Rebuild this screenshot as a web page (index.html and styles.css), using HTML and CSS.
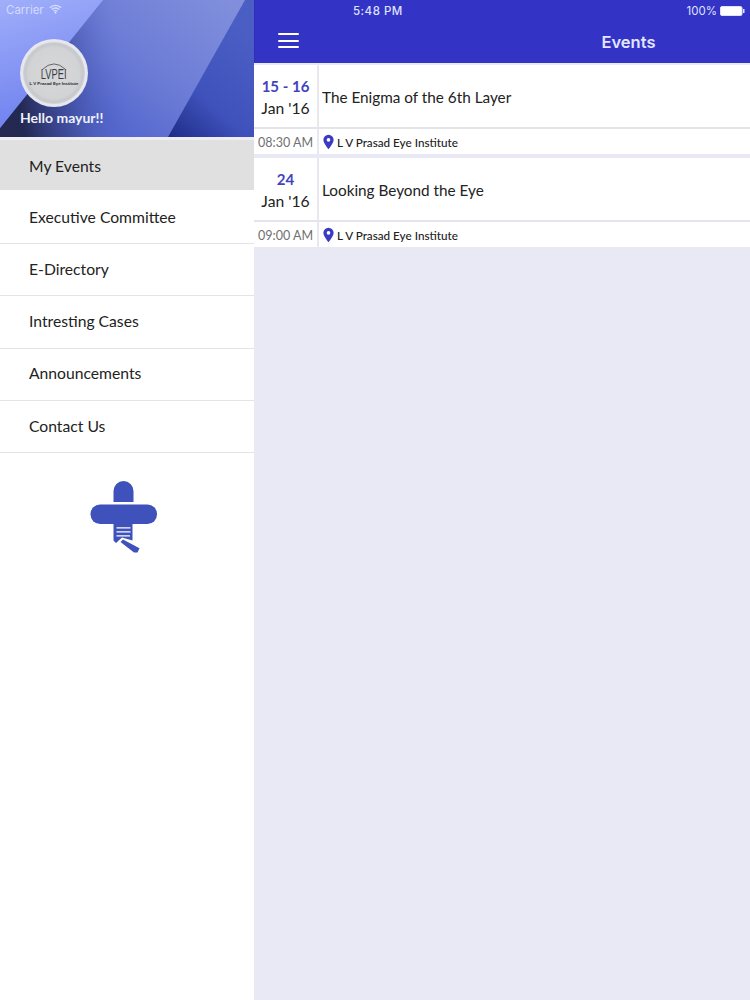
FILE: index.html
```html
<!DOCTYPE html>
<html lang="en">
<head>
<meta charset="utf-8">
<title>Events</title>
<link rel="stylesheet" href="styles.css">
</head>
<body>
<div class="app">
  <aside class="sidebar">
    <header class="profile">
      <svg class="profile-bg" viewBox="0 0 254 137" preserveAspectRatio="none" aria-hidden="true">
        <defs>
          <linearGradient id="gLight" gradientUnits="userSpaceOnUse" x1="0" y1="0" x2="40" y2="130">
            <stop offset="0" stop-color="#a0aefa"/><stop offset="1" stop-color="#6c7fee"/>
          </linearGradient>
          <linearGradient id="gMid" gradientUnits="userSpaceOnUse" x1="240" y1="0" x2="130" y2="137">
            <stop offset="0" stop-color="#8290dc"/><stop offset="0.6" stop-color="#6d7dd6"/><stop offset="1" stop-color="#5568ce"/>
          </linearGradient>
          <linearGradient id="gShade" gradientUnits="userSpaceOnUse" x1="20" y1="110" x2="140" y2="90">
            <stop offset="0" stop-color="#20254a" stop-opacity="0.95"/><stop offset="0.35" stop-color="#2f3878" stop-opacity="0.6"/><stop offset="0.9" stop-color="#5568ce" stop-opacity="0"/>
          </linearGradient>
          <linearGradient id="gRight" gradientUnits="userSpaceOnUse" x1="254" y1="40" x2="170" y2="137">
            <stop offset="0" stop-color="#4a5ec4"/><stop offset="0.6" stop-color="#3f52bc"/><stop offset="1" stop-color="#1f2d88"/>
          </linearGradient>
        </defs>
        <rect width="254" height="137" fill="url(#gMid)"/>
        <polygon points="0,128 103,0 200,0 130,137 0,137" fill="url(#gShade)"/>
        <polygon points="0,0 103,0 0,128" fill="url(#gLight)"/>
        <polygon points="245,0 254,0 254,137 168,137" fill="url(#gRight)"/>
      </svg>
      <div class="status-left">
        <span>Carrier</span>
        <svg class="wifi" viewBox="0 0 14 10" aria-hidden="true">
          <path d="M1 3.600a8.400 8.400 0 0 1 12 0M3 5.600a5.600 5.600 0 0 1 8 0M5 7.500a2.800 2.800 0 0 1 4 0" fill="none" stroke="#d9e0ff" stroke-width="1.400"/>
          <circle cx="7" cy="9" r="1" fill="#d9e0ff"/>
        </svg>
      </div>
      <div class="avatar">
        <div class="avatar-inner">
          <svg class="avatar-arc" viewBox="0 0 30 10" aria-hidden="true"><path d="M2 9.500Q15 -3 28 9.500" fill="none" stroke="#55585f" stroke-width="1"/></svg>
          <span class="avatar-mark">LVPEI</span>
          <span class="avatar-name">L V Prasad Eye Institute</span>
        </div>
      </div>
      <p class="hello">Hello mayur!!</p>
    </header>
    <nav class="menu">
      <a class="menu-item active">My Events</a>
      <a class="menu-item first">Executive Committee</a>
      <a class="menu-item">E-Directory</a>
      <a class="menu-item">Intresting Cases</a>
      <a class="menu-item">Announcements</a>
      <a class="menu-item">Contact Us</a>
    </nav>
    <div class="logo">
      <svg viewBox="0 0 68 73" width="68" height="73" aria-hidden="true">
        <path d="M23.500 21V10a10 10 0 0 1 20 0v11z" fill="#3f51bb"/>
        <rect x="0.500" y="23.500" width="66.500" height="19.500" rx="9.500" fill="#3f51bb"/>
        <path d="M23.500 42H42.500V59.500L32 56.500L26 62L23.500 59.500z" fill="#3f51bb"/>
        <path d="M26.500 46.800H40.500M26.500 50.800H40.500M26.500 54.800H40" stroke="#fff" stroke-width="1.300"/>
        <path d="M30.500 61L33 58.500L49.500 67.300L47.500 71.500L44 71.500z" fill="#3f51bb"/>
      </svg>
    </div>
  </aside>
  <main class="content">
    <header class="navbar">
      <div class="status">
        <span class="status-time">5:48 PM</span>
        <span class="status-battery">100%
          <svg class="battery" viewBox="0 0 25 10" aria-hidden="true">
            <rect x="0.500" y="0.500" width="21.500" height="9" rx="1.500" fill="#fff" stroke="#dfe2ff"/>
            <rect x="23" y="3" width="1.500" height="4" fill="#dfe2ff"/>
          </svg>
        </span>
      </div>
      <div class="bar">
        <button class="burger" aria-label="Menu"><i></i><i></i><i></i></button>
        <h1 class="title">Events</h1>
      </div>
    </header>
    <section class="events">
      <article class="event">
        <div class="event-top">
          <div class="date"><b>15 - 16</b><span>Jan '16</span></div>
          <div class="name">The Enigma of the 6th Layer</div>
        </div>
        <div class="event-bottom">
          <div class="time">08:30 AM</div>
          <div class="place">
            <svg class="pin" viewBox="0 0 12 16" aria-hidden="true"><path fill-rule="evenodd" d="M6 0a5.600 5.600 0 0 1 5.600 5.600C11.600 9.500 6 16 6 16S.4 9.500.4 5.600A5.600 5.600 0 0 1 6 0zm0 3.700a2 2 0 1 0 0 4 2 2 0 0 0 0-4z" fill="#3a3ac4"/></svg>
            L V Prasad Eye Institute
          </div>
        </div>
      </article>
      <article class="event">
        <div class="event-top">
          <div class="date"><b>24</b><span>Jan '16</span></div>
          <div class="name">Looking Beyond the Eye</div>
        </div>
        <div class="event-bottom">
          <div class="time">09:00 AM</div>
          <div class="place">
            <svg class="pin" viewBox="0 0 12 16" aria-hidden="true"><path fill-rule="evenodd" d="M6 0a5.600 5.600 0 0 1 5.600 5.600C11.600 9.500 6 16 6 16S.4 9.500.4 5.600A5.600 5.600 0 0 1 6 0zm0 3.700a2 2 0 1 0 0 4 2 2 0 0 0 0-4z" fill="#3a3ac4"/></svg>
            L V Prasad Eye Institute
          </div>
        </div>
      </article>
    </section>
  </main>
</div>
</body>
</html>
```
FILE: styles.css
```css
* { box-sizing: border-box; }
html, body { margin: 0; height: 100%; }
body { font-family: Lato, "Open Sans", sans-serif; color: #222; background: #fff; overflow: hidden; }
.app { display: flex; width: 750px; height: 1000px; }

.sidebar { width: 254px; flex: none; background: #fff; display: flex; flex-direction: column; }
.profile { position: relative; height: 137px; flex: none; overflow: hidden; padding: 3px 0 0 6px; }
.profile-bg { position: absolute; left: 0; top: 0; width: 100%; height: 100%; }
.status-left { position: relative; display: flex; align-items: center; gap: 5px; height: 14px; font: 11.500px Inter, sans-serif; color: #d3daff; }
.wifi { width: 13px; height: 10px; margin-bottom: 2px; }
.avatar { position: absolute; left: 20px; top: 39px; width: 68px; height: 68px; border-radius: 50%; background: #e6e8ee; padding: 3px; }
.avatar-inner { position: relative; width: 62px; height: 62px; border-radius: 50%; background: radial-gradient(circle at 50% 50%, #d8d8da 0, #d2d3d5 58%, #c6c8cc 66%, #dfe0e4 76%, #e4e5ea 100%); display: flex; flex-direction: column; align-items: center; padding-top: 25px; }
.avatar-arc { position: absolute; left: 17px; top: 19px; width: 28px; height: 9px; }
.avatar-mark { font: 15px/14px "Liberation Sans", sans-serif; color: #3a3d45; transform: scaleX(.62); }
.avatar-name { font: bold 4.300px/6px "Liberation Sans", sans-serif; color: #26282e; white-space: nowrap; }
.hello { position: absolute; left: 20px; top: 109px; margin: 0; font-size: 14px; line-height: 18px; font-weight: 700; color: #eef0fb; }

.menu { display: flex; flex-direction: column; }
.menu-item { display: flex; align-items: center; height: 52.300px; padding: 0 0 2px 29px; font-size: 15.700px; color: #222; border-bottom: 1px solid #e4e4e4; }
.menu-item.active { height: 53px; margin-bottom: 3px; padding: 2px 0 0 29px; background: #e0e0e0; border-top: 3px solid #eeeef2; border-bottom: 0; }
.menu-item.first { height: 51px; padding-bottom: 3px; }
.logo { display: flex; justify-content: center; padding: 28px 7px 0 0; }

.content { flex: 1; background: #e8e9f5; display: flex; flex-direction: column; }
.navbar { height: 63px; flex: none; background: #3333c6; color: #eef0ff; border-left: 1px solid #2f2fb8; }
.status { display: flex; justify-content: space-between; align-items: center; height: 21px; padding: 0 5px 0 98px; font: 11.500px Inter, sans-serif; color: #dfe2ff; }
.status-time { letter-spacing: .5px; font-weight: 500; }
.status-battery { display: flex; align-items: center; gap: 3px; }
.battery { width: 25px; height: 10px; }
.bar { position: relative; display: flex; align-items: center; justify-content: center; height: 41px; padding-left: 252px; }
.burger { position: absolute; left: 23px; top: 12px; width: 21px; height: 15px; padding: 0; border: 0; background: none; display: flex; flex-direction: column; justify-content: space-between; }
.burger i { display: block; height: 2px; border-radius: 1px; background: #fff; }
.title { margin: 0; font: 600 16.500px Inter, sans-serif; color: #e3e6ff; }

.events { padding-top: 2px; display: flex; flex-direction: column; gap: 4px; }
.event { background: #fff; }
.event-top { display: flex; height: 64px; border-bottom: 2px solid #e4e4ea; }
.date { width: 65px; flex: none; border-right: 2px solid #e8e8ee; display: flex; flex-direction: column; align-items: center; justify-content: center; font-size: 15.700px; line-height: 22px; color: #222; padding-top: 1px; }
.date b { font-weight: 700; color: #4343c0; font-size: 15px; }
.name { display: flex; align-items: center; padding: 2px 0 0 3px; font-size: 15.300px; color: #222; }
.event-bottom { display: flex; height: 25px; }
.time { width: 65px; flex: none; border-right: 2px solid #e8e8ee; display: flex; align-items: center; justify-content: flex-end; padding: 1px 4px 0 0; font-size: 12.500px; color: #707070; white-space: nowrap; }
.place { display: flex; align-items: center; gap: 3px; padding: 1px 0 0 4px; font-size: 11.700px; color: #222; font-weight: 500; }
.pin { width: 11px; height: 16px; }
```
